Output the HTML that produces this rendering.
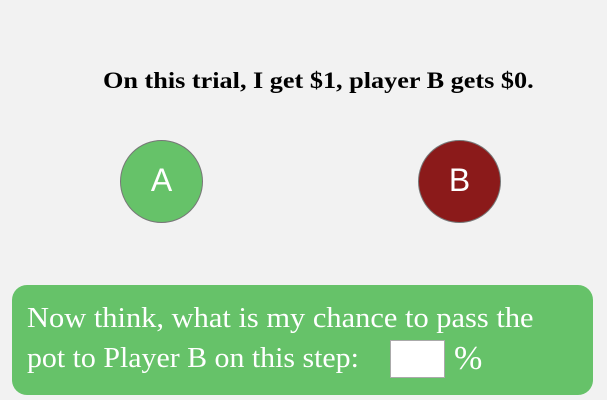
<!DOCTYPE html>
<html><head><style>
body{margin:0;width:607px;height:400px;background:#f2f2f2;position:relative;overflow:hidden;font-family:"Liberation Serif",serif}
.t{position:absolute;left:103px;top:68px;font-size:23px;font-weight:bold;color:#000;white-space:nowrap;transform:scaleX(1.14);transform-origin:0 0}
.c{position:absolute;width:83px;height:83px;border-radius:50%;border:1px solid #777;box-sizing:border-box;color:#fff;font-family:"Liberation Sans",sans-serif;font-size:32px;text-align:center;line-height:78px}
.box{position:absolute;left:12px;top:285px;width:581px;height:110px;background:#66c269;border-radius:15px}
.l{position:absolute;left:27px;color:#fff;font-size:29px;white-space:nowrap;transform-origin:0 0}
.in{position:absolute;left:390px;top:340px;width:55px;height:38px;background:#fff;border:1px solid #aaa;box-sizing:border-box}
</style></head><body>
<div class="t">On this trial, I get $1, player B gets $0.</div>
<div class="c" style="left:120px;top:140px;background:#66c269">A</div>
<div class="c" style="left:418px;top:140px;background:#8b1a1a">B</div>
<div class="box"></div>
<div class="l" style="top:302px;transform:scaleX(1.05)">Now think, what is my chance to pass the</div>
<div class="l" style="top:342px;transform:scaleX(1.03)">pot to Player B on this step:</div>
<div class="in"></div>
<div class="l" style="left:454px;top:340px;font-size:34px">%</div>
</body></html>
